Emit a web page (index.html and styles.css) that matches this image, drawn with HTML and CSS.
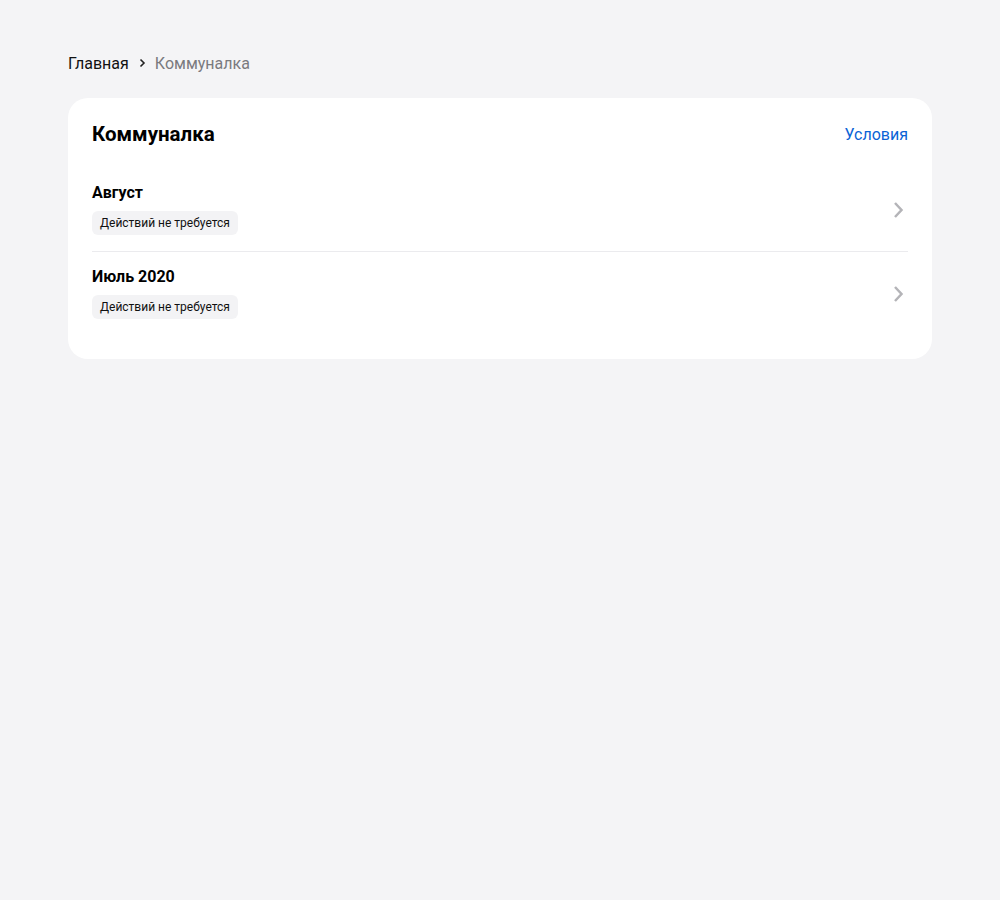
FILE: index.html
```html
<!DOCTYPE html>
<html lang="ru">
<head>
<meta charset="utf-8">
<link rel="stylesheet" href="styles.css">
</head>
<body>
<div class="page">
  <nav class="crumbs">
    <a class="crumb" href="#">Главная</a>
    <svg class="crumb-sep" width="8" height="10" viewBox="0 0 8 10"><path d="M2.5 1.5 L6 5 L2.5 8.5" fill="none" stroke="#222" stroke-width="1.6"/></svg>
    <span class="crumb current">Коммуналка</span>
  </nav>
  <section class="card">
    <header class="card-head">
      <h1 class="card-title">Коммуналка</h1>
      <a class="card-link" href="#">Условия</a>
    </header>
    <div class="list">
      <a class="row" href="#">
        <div class="row-body">
          <div class="row-title">Август</div>
          <span class="tag">Действий не требуется</span>
        </div>
        <svg class="chev" width="14" height="20" viewBox="0 0 14 20"><path d="M4 3 L10.5 10 L4 17" fill="none" stroke="#b4b4b8" stroke-width="2.5"/></svg>
      </a>
      <a class="row" href="#">
        <div class="row-body">
          <div class="row-title">Июль 2020</div>
          <span class="tag">Действий не требуется</span>
        </div>
        <svg class="chev" width="14" height="20" viewBox="0 0 14 20"><path d="M4 3 L10.5 10 L4 17" fill="none" stroke="#b4b4b8" stroke-width="2.5"/></svg>
      </a>
    </div>
  </section>
</div>
</body>
</html>
```
FILE: styles.css
```css
* { box-sizing: border-box; }
html, body { margin: 0; padding: 0; }
body {
  background: #f4f4f6;
  font-family: Roboto, "Noto Sans", sans-serif;
  color: #000;
}
.page {
  padding: 51px 68px 0 68px;
}
.crumbs {
  display: flex;
  align-items: center;
  height: 24px;
  font-size: 16px;
  gap: 9px;
}
.crumb { color: #111; text-decoration: none; }
.crumb.current { color: #7a7a7e; }
.crumb-sep { display: block; }
.card {
  margin-top: 23px;
  background: #fff;
  border-radius: 20px;
  padding: 24px 24px 24px 24px;
}
.card-head {
  display: flex;
  justify-content: space-between;
  align-items: center;
  height: 24px;
  margin-bottom: 22px;
}
.card-title {
  margin: 0;
  font-size: 20.5px;
  font-weight: 700;
  line-height: 24px;
}
.card-link {
  color: #0a63d6;
  text-decoration: none;
  font-size: 16px;
}
.row {
  display: flex;
  align-items: center;
  justify-content: space-between;
  padding: 16px 0;
  text-decoration: none;
  color: inherit;
}
.row + .row { border-top: 1px solid #ebebee; }
.row-body {
  display: flex;
  flex-direction: column;
  align-items: flex-start;
  gap: 9px;
}
.row-title {
  font-size: 16px;
  font-weight: 700;
  line-height: 18px;
}
.tag {
  display: inline-block;
  background: #f3f3f5;
  border-radius: 6px;
  padding: 0 8px;
  height: 24px;
  line-height: 24px;
  font-size: 12px;
  color: #111;
}
.chev { display: block; margin-right: 3px; }
```
